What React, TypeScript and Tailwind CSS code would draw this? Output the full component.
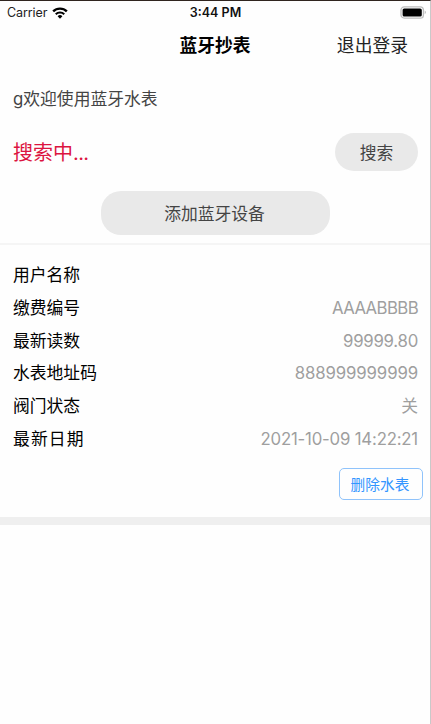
import React from "react";

const meterInfo = [
  { id: 1, label: "用户名称", value: "", labelClass: "", valueClass: "" },
  { id: 2, label: "缴费编号", value: "AAAABBBB", labelClass: "", valueClass: "tracking-[-0.62px]" },
  { id: 3, label: "最新读数", value: "99999.80", labelClass: "", valueClass: "tracking-[-0.25px]" },
  { id: 4, label: "水表地址码", value: "888999999999", labelClass: "", valueClass: "tracking-[-0.12px]" },
  { id: 5, label: "阀门状态", value: "关", labelClass: "", valueClass: "" },
  { id: 6, label: "最新日期", value: "2021-10-09 14:22:21", labelClass: "tracking-[1.1px]", valueClass: "tracking-[-0.2px]" },
];

const WifiIcon = () => (
  <svg width="16" height="12" viewBox="0 0 17 13" fill="none">
    <path d="M1.1 4.8a10.6 10.6 0 0 1 14.8 0" stroke="#000" strokeWidth="2.6" />
    <path d="M3.9 7.8a6.7 6.7 0 0 1 9.2 0" stroke="#000" strokeWidth="2.3" />
    <path d="M8.5 12.7 5.9 10a3.8 3.8 0 0 1 5.2 0z" fill="#000" />
  </svg>
);

const BatteryIcon = () => (
  <svg width="27" height="13" viewBox="0 0 27 13" fill="none">
    <rect x="1" y="0.9" width="22.4" height="11.2" rx="3.2" stroke="#bdbdbd" strokeWidth="1.3" />
    <rect x="2.6" y="2.5" width="19.2" height="8" rx="1.6" fill="#000" />
    <path d="M24.7 4.6c1.7.6 1.7 3 0 3.6z" fill="#bdbdbd" />
  </svg>
);

const App = () => {
  return (
    <div className="h-[724px] w-[431px] overflow-hidden border-t border-r border-t-[#30251f] border-r-[#c9c9c9] bg-[#fefefe] font-['Inter','Noto_Sans_CJK_SC',sans-serif] text-[16.8px] leading-6 text-black">
      {/* Status bar */}
      <div className="grid h-[22px] grid-cols-3 items-center pr-[3px] pl-[7px] text-[12.5px] text-[#222]">
        <div className="flex items-center gap-[5px]">
          <span className="tracking-[-0.1px]">Carrier</span>
          <WifiIcon />
        </div>
        <span className="pr-[3px] text-center font-semibold text-[#111]">3:44 PM</span>
        <div className="flex justify-end pb-0.5">
          <BatteryIcon />
        </div>
      </div>

      {/* Navigation bar */}
      <div className="grid h-[44px] grid-cols-3 items-center pt-0.5 pr-[22px] pl-[22px] text-[17.8px]">
        <h1 className="col-start-2 text-center font-bold">蓝牙抄表</h1>
        <button className="text-right text-[#222]">退出登录</button>
      </div>

      {/* Search area */}
      <div className="h-[178px] border-b-2 border-[#f5f5f5] px-[13px] pt-5">
        <p className="text-[#444]">g欢迎使用蓝牙水表</p>
        <div className="mt-[22px] flex items-center justify-between">
          <span className="pt-0.5 text-[20px] text-[#dc1440]">
            搜索中<span className="tracking-[-0.6px]">...</span>
          </span>
          <button className="mr-[-1px] h-[38px] w-[83px] rounded-full bg-[#e9e9e9] pt-px text-[#444]">搜索</button>
        </div>
        <button className="mt-5 ml-[88px] block h-[44px] w-[229px] rounded-[20px] bg-[#e9e9e9] pt-px pr-0.5 text-[#444]">
          添加蓝牙设备
        </button>
      </div>

      {/* Meter details */}
      <div className="h-[280px] border-b-8 border-[#efefef] pt-[14px]">
        {meterInfo.map((item) => (
          <div className="flex h-[32.7px] items-center justify-between pr-3 pl-[13px]" key={item.id}>
            <span className={item.labelClass}>{item.label}</span>
            <span className={`text-[#9f9f9f] ${item.valueClass}`}>{item.value}</span>
          </div>
        ))}
        <div className="mt-[13px] flex justify-end pr-[7px]">
          <button className="h-8 w-[84px] rounded-[5px] border border-[#8fc3fb] pt-px pr-0.5 text-[14.7px] text-[#3395ff]">
            删除水表
          </button>
        </div>
      </div>
    </div>
  );
};

export default App;
